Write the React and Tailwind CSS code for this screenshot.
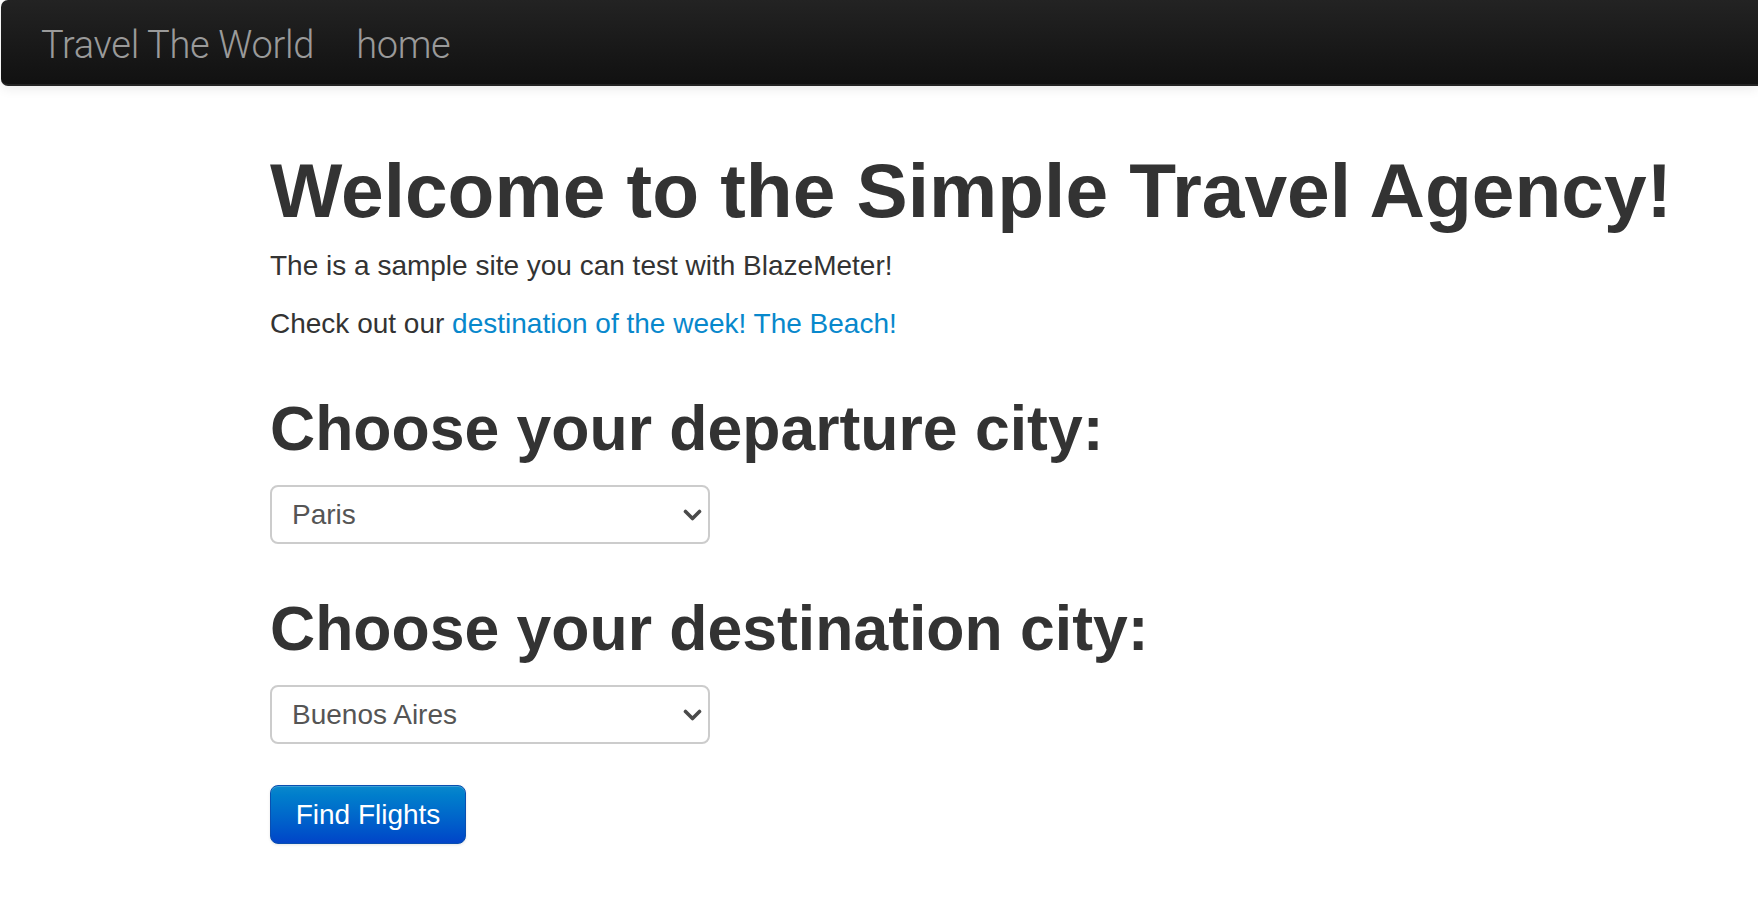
import React from "react";

function Chevron() {
  return (
    <svg
      className="pointer-events-none absolute right-[8px] top-1/2 -translate-y-1/2"
      width="19"
      height="12"
      viewBox="0 0 19 12"
      fill="none"
    >
      <path d="M2.5 2.5l7 7 7-7" stroke="#4a4a4a" strokeWidth="3.6" strokeLinecap="round" strokeLinejoin="round" />
    </svg>
  );
}

function CitySelect({ value, options }) {
  return (
    <div className="relative w-[440px]">
      <select
        defaultValue={value}
        className="box-border block h-[59px] w-full appearance-none rounded-[8px] border-2 border-[#cccccc] bg-white pl-[20px] pr-[40px] text-[28px] leading-[34px] text-[#555555] outline-none"
      >
        {options.map((o) => (
          <option key={o} value={o}>
            {o}
          </option>
        ))}
      </select>
      <Chevron />
    </div>
  );
}

export default function App() {
  const departures = ["Paris", "Philadelphia", "Boston", "Portland", "San Diego", "Mexico City", "São Paolo"];
  const destinations = ["Buenos Aires", "Rome", "London", "Berlin", "New York", "Dublin", "Cairo"];
  return (
    <div className="min-h-screen bg-white font-['Liberation_Sans',Arial,sans-serif] text-[#333333]">
      <nav className="ml-[1px] flex h-[86px] items-center rounded-l-[7px] border-b-2 border-[#252525] bg-gradient-to-b from-[#232323] to-[#111111] pl-[40px] pt-[6px] shadow-[0_3px_12px_rgba(0,0,0,0.08)]">
        <a
          href="#"
          className="font-['Roboto',sans-serif] text-[38px] font-light leading-[44px] tracking-[-0.3px] text-[#9a9a9a]"
        >
          Travel The World
        </a>
        <a
          href="#"
          className="ml-[42px] font-['Roboto',sans-serif] text-[38px] font-light leading-[44px] tracking-[-0.3px] text-[#9a9a9a]"
        >
          home
        </a>
      </nav>

      <main className="pl-[270px]">
        <h1 className="mt-[65px] text-[76.7px] font-bold leading-[80px]">
          Welcome to the Simple Travel Agency!
        </h1>
        <p className="mt-[15px] text-[28px] leading-[40px]">The is a sample site you can test with BlazeMeter!</p>
        <p className="mt-[18px] text-[28px] leading-[40px]">
          Check out our{" "}
          <a href="#" className="text-[#0888cc]">
            destination of the week! The Beach!
          </a>
        </p>

        <form>
          <h2 className="mt-[44px] text-[62.5px] font-bold leading-[80px]">Choose your departure city:</h2>
          <div className="mt-[17px]">
            <CitySelect value="Paris" options={departures} />
          </div>
          <h2 className="mt-[44px] text-[62.5px] font-bold leading-[80px]">Choose your destination city:</h2>
          <div className="mt-[17px]">
            <CitySelect value="Buenos Aires" options={destinations} />
          </div>
          <button
            type="button"
            className="mt-[41px] h-[59px] w-[196px] rounded-[8px] border border-[#0a4fb0] bg-gradient-to-b from-[#0a88cc] to-[#0444c8] text-[28px] leading-[34px] text-white shadow-[inset_0_1px_0_rgba(255,255,255,0.2),0_1px_3px_rgba(0,0,0,0.1)]"
          >
            Find Flights
          </button>
        </form>
      </main>
    </div>
  );
}
